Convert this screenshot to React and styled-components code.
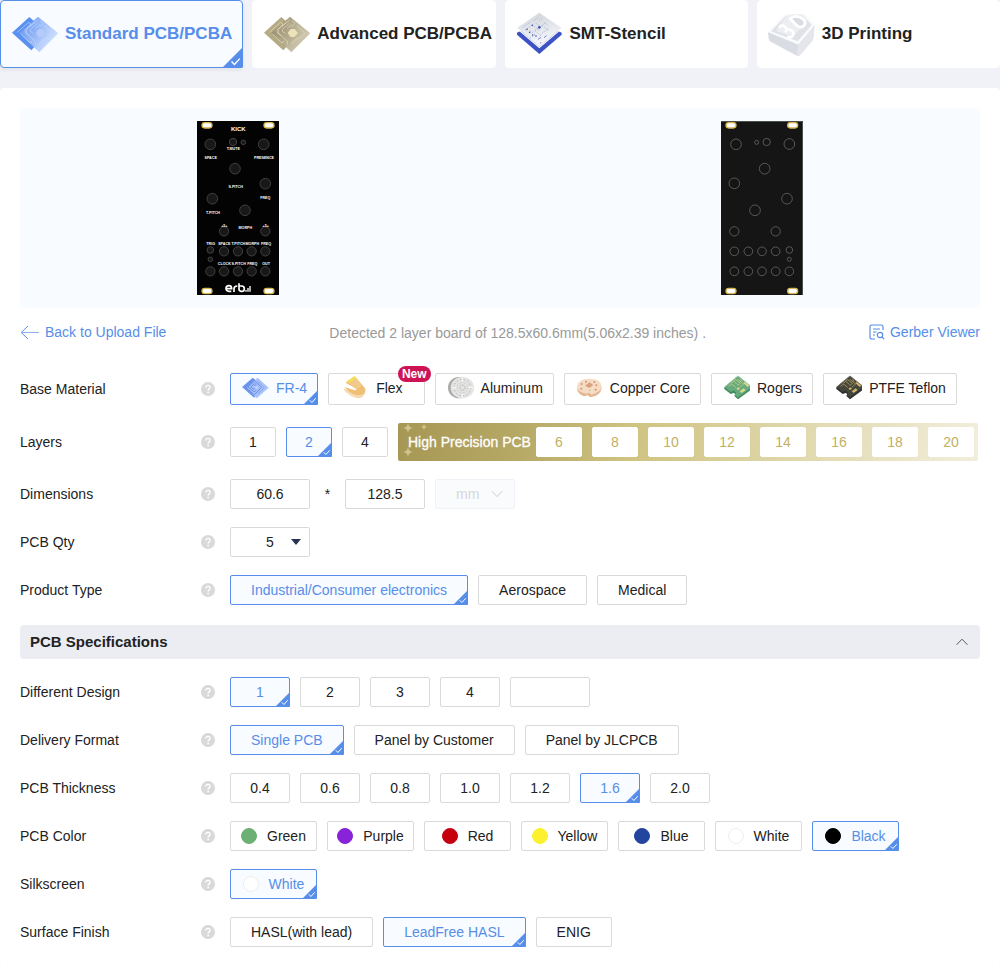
import React, { useState } from "react";
import styled, { createGlobalStyle, css } from "styled-components";

const blue = "#568ee9";
const ink = "#222";

const GlobalStyle = createGlobalStyle`
  *, *::before, *::after { box-sizing: border-box; }
  body {
    margin: 0;
    background: #f1f2f7;
    color: ${ink};
    font-family: "Liberation Sans", Arial, Helvetica, sans-serif;
    font-size: 14px;
    line-height: 16px;
  }
  button, input, select { font: inherit; color: inherit; margin: 0; }
  button { cursor: pointer; }
  svg { display: block; flex: none; }
`;

/* ---------- layout ---------- */

const Tabs = styled.nav`
  display: grid;
  grid-template-columns: repeat(4, 1fr);
  gap: 9px;
  margin-bottom: 20px;
`;

const Tab = styled.button`
  position: relative;
  display: flex;
  align-items: center;
  gap: 6px;
  height: 68px;
  padding: 0 0 0 10px;
  border: 1px solid ${(p) => (p.$on ? blue : "#fff")};
  border-radius: 4px;
  background: ${(p) => (p.$on ? "#f8fbff" : "#fff")};
  color: ${(p) => (p.$on ? blue : ink)};
  box-shadow: ${(p) => (p.$on ? "0 2px 4px rgba(0, 0, 0, 0.06)" : "none")};
  font-size: 17px;
  font-weight: 700;
  white-space: nowrap;
`;

const Panel = styled.main`
  background: #fff;
  border-radius: 4px;
  padding: 20px;
`;

const Preview = styled.section`
  display: grid;
  grid-template-columns: 1fr 1fr;
  gap: 88px;
  justify-items: center;
  align-items: center;
  height: 200px;
  background: #f8fbff;
`;

const InfoBar = styled.div`
  display: flex;
  justify-content: space-between;
  align-items: center;
  height: 48px;
  margin-bottom: 17px;
`;

const InfoText = styled.p`
  margin: 0;
  padding-top: 2px;
  color: #999;
`;

const TextLink = styled.a`
  display: flex;
  align-items: center;
  gap: ${(p) => (p.$end ? "5px" : "6px")};
  color: ${blue};
  text-decoration: none;
`;

const Fields = styled.div`
  display: flex;
  flex-direction: column;
  gap: 18px;
`;

const Row = styled.div`
  display: flex;
  align-items: center;
  gap: 15px;
`;

const RowHead = styled.div`
  display: flex;
  align-items: center;
  justify-content: space-between;
  flex: none;
  width: 195px;
`;

const Controls = styled.div`
  display: flex;
  align-items: center;
  gap: 10px;
`;

const SectionHead = styled.button`
  display: flex;
  align-items: center;
  justify-content: space-between;
  width: 100%;
  height: 34px;
  margin: 20px 0 18px;
  padding: 0 12px 0 10px;
  border: 0;
  border-radius: 4px;
  background: #ecedf3;
  font-size: 15px;
  font-weight: 700;
`;

/* ---------- controls ---------- */

const box = css`
  height: 30px;
  border: 1px solid #d9d9d9;
  border-radius: 2px;
  background: #fff;
`;

const Option = styled.button`
  ${box}
  position: relative;
  display: flex;
  align-items: center;
  justify-content: center;
  padding: 0 ${(p) => (p.$width ? "0" : "20px")};
  width: ${(p) => (p.$width ? `${p.$width}px` : "auto")};
  white-space: nowrap;
  ${(p) => p.$on && css`
    border-color: ${blue};
    background: #f8fbff;
    color: ${blue};
  `}
`;

const Material = styled(Option)`
  height: 32px;
  gap: 7px;
  padding: ${(p) => (p.$wide ? "0 21px 2px 12px" : "0 10px 2px")};
`;

const Swatch = styled(Option)`
  gap: 10px;
  padding: 0;
  width: 87px;
`;

const Dot = styled.span`
  width: 16px;
  height: 16px;
  border-radius: 50%;
  background: ${(p) => p.$color};
  border: 1px solid ${(p) => (p.$color === "#fff" ? "#eee" : p.$color)};
`;

const Badge = styled.span`
  position: absolute;
  top: -8px;
  right: -7px;
  height: 16px;
  padding: 0 4px;
  border-radius: 8px;
  background: #ce1355;
  color: #fff;
  font-size: 12px;
  font-weight: 700;
  line-height: 16px;
`;

const CornerMark = styled.svg`
  position: absolute;
  right: -1px;
  bottom: -1px;
`;

const Field = styled.input`
  ${box}
  width: 80px;
  padding: 0;
  text-align: center;
`;

const Times = styled.span`
  width: 15px;
  text-align: center;
`;

const SelectWrap = styled.div`
  position: relative;
  width: 80px;
  svg {
    position: absolute;
    top: 50%;
    right: ${(p) => p.$right}px;
    transform: translateY(-50%);
    pointer-events: none;
  }
`;

const Select = styled.select`
  ${box}
  appearance: none;
  width: 100%;
  padding: 0 0 0 ${(p) => p.$indent}px;
  &:disabled {
    border-color: #f1f2f7;
    background: #fafbfd;
    color: #d5d7dc;
    opacity: 1;
  }
`;

const Band = styled.div`
  position: relative;
  display: flex;
  align-items: center;
  gap: 10px;
  height: 38px;
  padding: 4px 4px 4px 10px;
  border-radius: 2px;
  background: linear-gradient(97deg, #a79755 0%, #b5a764 20%, #cfc381 40%, #f2eedc 100%);
`;

const BandLabel = styled.span`
  margin-right: -5px;
  color: #fff;
  font-weight: 400;
  -webkit-text-stroke: 0.3px #fff;
  white-space: nowrap;
`;

const BandOption = styled(Option)`
  border-color: #fff;
  color: #c2b05f;
`;

const Sparkles = styled.svg`
  position: absolute;
  top: 0;
  left: 0;
`;

/* ---------- small drawings ---------- */

const Corner = ({ size = 15 }) => (
  <CornerMark width={size} height={size} viewBox="0 0 15 15" aria-hidden="true">
    <path d="M15 0v14a1 1 0 0 1-1 1H0z" fill={blue} />
    <path d="M6.8 10.3l2.1 2.2 3.8-4.2" fill="none" stroke="#fff" strokeWidth="1" />
  </CornerMark>
);

const Help = () => (
  <svg width="14" height="14" viewBox="0 0 14 14" aria-hidden="true">
    <circle cx="7" cy="7" r="7" fill="#d9d9d9" />
    <path d="M4.9 5.5c0-1.3.9-2.1 2.1-2.1s2.1.8 2.1 1.9c0 1.5-2 1.6-2 3.2" fill="none" stroke="#fff" strokeWidth="1.4" />
    <circle cx="7.1" cy="10.4" r="0.9" fill="#fff" />
  </svg>
);

const BackArrow = () => (
  <svg width="19" height="15" viewBox="0 0 19 15" fill="none" stroke={blue} aria-hidden="true">
    <path d="M8 1L1.2 7.5 8 14" />
    <path d="M1.5 7.5H19" opacity="0.7" />
  </svg>
);

const ViewerIcon = () => (
  <svg width="16" height="16" viewBox="0 0 16 16" fill="none" stroke={blue} strokeWidth="1.2" aria-hidden="true">
    <path d="M6 15H2.8A1.8 1.8 0 0 1 1 13.2V2.8A1.8 1.8 0 0 1 2.8 1H12.2A1.8 1.8 0 0 1 14 2.8V6" />
    <path d="M4 5h7M4 8h3.5M4 11h2" />
    <circle cx="11" cy="11" r="2.7" />
    <path d="M13 13l2.2 2.2" />
  </svg>
);

const ChevronUp = () => (
  <svg width="12" height="8" viewBox="0 0 12 8" fill="none" stroke="#555" aria-hidden="true">
    <path d="M0.5 6.8L6 1.2l5.5 5.6" />
  </svg>
);

const ChevronDown = () => (
  <svg width="12" height="8" viewBox="0 0 12 8" fill="none" stroke="#c8cad0" aria-hidden="true">
    <path d="M0.8 1.2L6 6.6l5.2-5.4" />
  </svg>
);

const Triangle = () => (
  <svg width="10" height="6" viewBox="0 0 10 6" aria-hidden="true">
    <path d="M0 0h10L5 6z" fill="#2c3350" />
  </svg>
);

/* Two stacked circuit boards; the palette changes between products. */
const ChipIcon = ({ id, back, from, to, trace, core }) => (
  <svg width="48" height="44" viewBox="33 36 144 132" aria-hidden="true">
    <defs>
      <linearGradient id={id} x1="0" y1="0" x2="1" y2="0.6">
        <stop offset="0" stopColor={from} />
        <stop offset="1" stopColor={to} />
      </linearGradient>
    </defs>
    <path d="M36 98L88 51l54 47-48 53z" fill={back} />
    <path d="M58 99l56-49 61 50-57 57z" fill={`url(#${id})`} opacity="0.95" />
    <g fill="none" stroke={trace} strokeWidth="2" strokeLinejoin="round">
      <path d="M52 97l34-30 7 5-18 18v7l12 10M62 102l28 27 7-5" />
      <path d="M113 60L80 88v12l26 24v10M104 66L89 79M112 70L91 88v6l8 6M118 74l-13 12" />
      <path d="M120 62l9 8-12 12M134 76l24 23-16 16-8 1-15 15" />
    </g>
    <path d="M107 99l9-12h12l10 12-11 12h-11z" fill={core} />
  </svg>
);

const StencilIcon = () => (
  <svg width="48" height="44" viewBox="47 36 144 132" aria-hidden="true">
    <defs>
      <linearGradient id="plate" x1="0.4" y1="0" x2="0.6" y2="1">
        <stop offset="0" stopColor="#d3d8dd" />
        <stop offset="1" stopColor="#f8f9fd" />
      </linearGradient>
    </defs>
    <path d="M50 98l12-6 55 45 55-45 12 6v6l-67 58-67-58z" fill="#3d53c5" />
    <path d="M50 84l67-46 67 46-67 56z" fill="url(#plate)" />
    <path d="M50 84l67 56 67-56v4l-67 57-67-57z" fill="#fff" />
    <g fill="none" stroke="#8794c4" strokeWidth="2" strokeDasharray="3 4">
      <path d="M67 82l24-16M74 90l20-14M100 62l14-10M116 61l12-7M106 69l18 13M101 79l18 13M133 69l11 8M126 77l18 14M135 69l-35 25" />
      <path d="M144 86l-24 17M90 92l15 12-16 9M104 92l20 17" />
    </g>
    <g fill="#3d53ad">
      <circle cx="117" cy="82" r="4" /><circle cx="80" cy="88" r="2.5" />
      <circle cx="88" cy="97" r="2.5" /><circle cx="97" cy="105" r="2.5" />
      <circle cx="107" cy="108" r="2.5" /><circle cx="96" cy="76" r="2.5" />
    </g>
    <path d="M113 118l9-6M119 130l4-2M131 113l8-6" stroke="#6175cf" strokeWidth="2.5" />
  </svg>
);

const PrintIcon = () => (
  <svg width="48" height="44" viewBox="803 36 144 132" aria-hidden="true">
    <path d="M803 96l90 36 50-58-4 40q-1 5-4 9l-36 42q-4 4-9 2l-79-42q-5-3-6-9z" fill="#d9dce2" />
    <path d="M893 132l50-58-4 40q-1 5-4 9l-36 42q-3 3-9 2z" fill="#e4e6ec" />
    <path d="M803 96l48-50q3-3 7-3l52-1q4 0 7 3l24 26q3 3 0 6l-45 54q-3 3-7 1z" fill="#f9fafc" />
    <path d="M812 94l44-46 52-2 26 29-42 49z" fill="#dfe2e7" />
    <path d="M828 88l30-40q2-3 6-3l38-3q4 0 7 3l9 12q2 4-1 7l-34 42q-4 5-10 3l-40-14q-6-2-5-7z" fill="#eceef2" />
    <g fill="none" stroke="#fff" strokeWidth="8" strokeLinecap="round" strokeLinejoin="round">
      <path d="M839 80q8-6 15 0t2 14q9-9 18-2t2 17q-5 5-12 2" />
    </g>
    <path d="M869 56l12-6q8-3 18 2 20 10 14 22-5 10-19 6z" fill="#d9dce2" stroke="#fff" strokeWidth="8" strokeLinejoin="round" />
  </svg>
);

const Fr4Icon = () => (
  <svg width="28" height="26" viewBox="723 198 84 78" aria-hidden="true">
    <path d="M726 234l32-28 34 28-30 32z" fill="#6f9aef" />
    <path d="M741 236l32-30 33 30-36 32z" fill="#a9c3fa" />
    <g fill="none" stroke="#5d83e6" strokeWidth="2.5">
      <path d="M735 234l25-23 25 24-22 22zM744 234l16-15 17 16-14 14zM752 234l9-8 8 8-7 7z" />
      <path d="M773 217l20 19-20 19" opacity="0.6" />
    </g>
    <path d="M763 235l7-7 8 7-8 8z" fill="#bcd0ff" />
  </svg>
);

const FlexIcon = () => (
  <svg width="28" height="26" viewBox="1023 198 84 78" aria-hidden="true">
    <path d="M1032 238q18 14 38 16 18 3 26-14v8q-4 20-24 20-20-4-40-24z" fill="#f6d9b4" />
    <path d="M1037 221l27-19 30 34q5 9-3 18-8 7-25 3-20-5-32-23 16 6 28 9 10 2 7-4z" fill="#efbf76" />
    <path d="M1041 216l23-14 6 6-22 16z" fill="#f5dd54" />
    <path d="M1048 223l21-15 18 21-17 13z" fill="#f2c98a" />
  </svg>
);

const AluminumIcon = () => (
  <svg width="28" height="26" viewBox="1335 198 84 78" aria-hidden="true">
    <ellipse cx="1374" cy="236" rx="33" ry="32" fill="#aaa" />
    <ellipse cx="1384" cy="236" rx="35" ry="32" fill="#e4e4e2" />
    <g fill="none" stroke="#b4b4b2">
      <circle cx="1384" cy="236" r="25" strokeWidth="3" strokeDasharray="5 6" />
      <circle cx="1384" cy="236" r="16" strokeWidth="2" strokeDasharray="3 3" />
      <circle cx="1384" cy="236" r="8" strokeWidth="3" strokeDasharray="4 2" />
    </g>
    <path d="M1384 206v12M1384 254v12M1354 236h12M1402 236h14" stroke="#fff" strokeWidth="3" />
  </svg>
);

const CopperIcon = () => (
  <svg width="28" height="26" viewBox="222 198 84 78" aria-hidden="true">
    <path d="M228 236q0 18 22 26l10-3 8 6q34-6 34-31z" fill="#e3b692" />
    <path d="M228 232q3-23 37-23 36 1 37 23-2 19-31 25l-6-6-10 3q-27-5-27-22z" fill="#f6dcc4" />
    <path d="M265 220l12 8-12 9-13-7z" fill="#d9a27f" />
    <g fill="#d29472">
      <circle cx="255" cy="218" r="3" /><circle cx="280" cy="219" r="3" />
      <circle cx="242" cy="225" r="3" /><circle cx="241" cy="239" r="3" />
      <circle cx="286" cy="229" r="3" /><circle cx="284" cy="242" r="3" />
      <circle cx="266" cy="244" r="2" />
    </g>
  </svg>
);

/* Notched board with contact pads, used for the high frequency laminates. */
const LaminateIcon = ({ top, side, edge, trace }) => (
  <svg width="28" height="26" viewBox="663 198 84 78" aria-hidden="true">
    <path d="M670 234v6l19 15 9-3 5 3-3 6 11 10 42-31v-6z" fill={side} />
    <path d="M670 234l41-34 42 34-42 31-10-8 5-6-8-7-9 5z" fill={top} />
    <path d="M671 234l40-33 41 33" fill="none" stroke={edge} strokeWidth="3" />
    <g fill="none" stroke={trace} strokeWidth="2">
      <path d="M683 232l9-7 12 10M691 222l7-5 12 10M699 216l5-4 14 11-8 7" />
      <path d="M710 211l18 14-12 10M717 211l7 6" />
    </g>
    <path d="M727 222l5-3 13 11-5 4zM716 247l12-9 6 5-12 9zM706 239l6-4 5 4-6 4z" fill={trace} />
  </svg>
);

/* ---------- board previews ---------- */

const frontHoles = [
  [61, 88, 16], [129, 81, 11], [160, 82, 7], [221, 88, 16], [135, 161, 16], [226, 206, 16],
  [67, 251, 16], [165, 286, 16], [102, 349, 14], [226, 349, 14], [61, 405, 10], [61, 433, 7],
  [102, 409, 14], [144, 409, 14], [185, 409, 14], [226, 409, 14],
  [61, 469, 14], [102, 469, 14], [144, 469, 14], [185, 469, 14], [226, 469, 14],
];

const frontTexts = [
  ["T.MUTE", 130, 106], ["SPACE", 62, 133], ["PRESENCE", 222, 133], ["S.PITCH", 137, 218],
  ["FREQ", 226, 251], ["T.PITCH", 69, 297], ["MORPH", 166, 343], ["+5+", 103, 335], ["+5+", 227, 335],
  ["TRIG", 62, 391], ["SPACE", 103, 391], ["T.PITCH", 145, 391], ["MORPH", 187, 391], ["FREQ", 228, 391],
  ["CLOCK", 103, 450], ["S.PITCH", 146, 450], ["FREQ", 187, 450], ["OUT", 228, 450],
];

const backHoles = [
  [72, 88, 16], [134, 82, 6], [164, 81, 11], [232, 87, 16], [158, 161, 16], [67, 205, 16],
  [225, 251, 16], [129, 286, 16], [67, 349, 14], [191, 349, 14], [232, 405, 10], [232, 433, 6],
  [67, 409, 13], [109, 409, 13], [150, 409, 13], [191, 409, 13],
  [67, 469, 13], [109, 469, 13], [150, 469, 13], [191, 469, 13], [232, 469, 13],
];

const Slots = ({ xs }) =>
  xs.flatMap((x) => [31, 528].map((y) => (
    <rect key={`${x}-${y}`} x={x - 15} y={y - 8} width="30" height="16" rx="8" fill="#fff" stroke="#d5b64e" strokeWidth="4" />
  )));

const BoardFront = () => (
  <svg width="82" height="174" viewBox="21 18 246 522" role="img" aria-label="Board front">
    <rect x="21" y="18" width="246" height="522" fill="#030303" />
    <Slots xs={[51, 237]} />
    <g fill="#181818" stroke="#585858" strokeWidth="2">
      {frontHoles.map(([x, y, r]) => <circle key={`${x}-${y}`} cx={x} cy={y} r={r} />)}
    </g>
    <g fill="#fff" fontWeight="700" textAnchor="middle">
      <text x="145" y="47" fontSize="18">KICK</text>
      {frontTexts.map(([t, x, y]) => <text key={`${x}-${y}`} x={x} y={y} fontSize="11">{t}</text>)}
    </g>
    <g fill="none" stroke="#fff" strokeWidth="5">
      <path d="M109 521h16q0-9-8-9-9 0-9 8 0 9 9 9h7M132 531v-10q0-8 10-8M147 505v18q0 6 8 6t8-8-8-8h-7" />
    </g>
    <path d="M166 525h4v5h-4zM172 519h4v11h-4zM178 513h4v17h-4z" fill="#fff" />
  </svg>
);

const BoardBack = () => (
  <svg width="82" height="174" viewBox="27 18 246 522" role="img" aria-label="Board back">
    <rect x="27" y="18" width="246" height="522" fill="#151515" />
    <path d="M27 19.5h244.5V540" fill="none" stroke="#4c504c" strokeWidth="3" />
    <Slots xs={[57, 242]} />
    <g fill="none" stroke="#777" strokeWidth="2">
      {backHoles.map(([x, y, r]) => <circle key={`${x}-${y}`} cx={x} cy={y} r={r} />)}
    </g>
  </svg>
);

/* ---------- data ---------- */

const products = [
  ["Standard PCB/PCBA", <ChipIcon id="chipStandard" back="#5a90ef" from="#5b8def" to="#d3e3fe" trace="#c3d8ff" core="#b4cbfb" />],
  ["Advanced PCB/PCBA", <ChipIcon id="chipAdvanced" back="#b5aa84" from="#8c8265" to="#d3cbb0" trace="#e8e0be" core="#ece3ba" />],
  ["SMT-Stencil", <StencilIcon />],
  ["3D Printing", <PrintIcon />],
];

const materials = [
  ["FR-4", <Fr4Icon />],
  ["Flex", <FlexIcon />],
  ["Aluminum", <AluminumIcon />],
  ["Copper Core", <CopperIcon />],
  ["Rogers", <LaminateIcon top="#69aa7d" side="#3f8d5e" edge="#98caa5" trace="#dcd98c" />],
  ["PTFE Teflon", <LaminateIcon top="#44453d" side="#30312d" edge="#77786d" trace="#d0b468" />],
];

const colors = [
  ["Green", "#6db074"], ["Purple", "#8923d8"], ["Red", "#c7000f"], ["Yellow", "#fcf02f"],
  ["Blue", "#22469e"], ["White", "#fff"], ["Black", "#000"],
];

/* ---------- form parts ---------- */

const FormRow = ({ id, label, htmlFor, children }) => (
  <Row>
    <RowHead>
      {htmlFor ? <label htmlFor={htmlFor}>{label}</label> : <span id={id}>{label}</span>}
      <Help />
    </RowHead>
    <Controls role={htmlFor ? undefined : "group"} aria-labelledby={htmlFor ? undefined : id}>
      {children}
    </Controls>
  </Row>
);

const Choices = ({ items, value, onChange, width }) =>
  items.map((item) => (
    <Option key={item} type="button" $width={width} $on={item === value} aria-pressed={item === value} onClick={() => onChange(item)}>
      {item}
      {item === value && <Corner />}
    </Option>
  ));

const Swatches = ({ items, value, onChange }) =>
  items.map(([name, color]) => (
    <Swatch key={name} type="button" $on={name === value} aria-pressed={name === value} onClick={() => onChange(name)}>
      <Dot $color={color} />
      {name}
      {name === value && <Corner />}
    </Swatch>
  ));

export default function App() {
  const [form, setForm] = useState({
    product: "Standard PCB/PCBA",
    material: "FR-4",
    layers: "2",
    type: "Industrial/Consumer electronics",
    design: "1",
    delivery: "Single PCB",
    thickness: "1.6",
    color: "Black",
    silkscreen: "White",
    finish: "LeadFree HASL",
  });
  const [open, setOpen] = useState(true);
  const set = (key) => (value) => setForm((f) => ({ ...f, [key]: value }));

  return (
    <>
      <GlobalStyle />
      <Tabs aria-label="Products">
        {products.map(([name, icon]) => (
          <Tab key={name} type="button" $on={name === form.product} aria-pressed={name === form.product} onClick={() => set("product")(name)}>
            {icon}
            {name}
            {name === form.product && <Corner size={21} />}
          </Tab>
        ))}
      </Tabs>

      <Panel>
        <Preview aria-label="Board preview">
          <BoardFront />
          <BoardBack />
        </Preview>

        <InfoBar>
          <TextLink href="#upload"><BackArrow />Back to Upload File</TextLink>
          <InfoText>Detected 2 layer board of 128.5x60.6mm(5.06x2.39 inches) .</InfoText>
          <TextLink href="#viewer" $end><ViewerIcon />Gerber Viewer</TextLink>
        </InfoBar>

        <Fields>
          <FormRow id="material" label="Base Material">
            {materials.map(([name, icon]) => (
              <Material key={name} type="button" $wide={name === "Flex"} $on={name === form.material} aria-pressed={name === form.material} onClick={() => set("material")(name)}>
                {icon}
                {name}
                {name === "Flex" && <Badge>New</Badge>}
                {name === form.material && <Corner />}
              </Material>
            ))}
          </FormRow>

          <FormRow id="layers" label="Layers">
            <Choices items={["1", "2", "4"]} value={form.layers} onChange={set("layers")} width={46} />
            <Band>
              <Sparkles width="36" height="38" viewBox="0 0 36 38" fill="#d0c48c" aria-hidden="true">
                <path d="M10 0q.6 4.400 5 5-4.400.6-5 5-.6-4.400-5-5 4.400-.6 5-5zM26 1q.4 2.600 3 3-2.600.4-3 3-.4-2.600-3-3 2.600-.4 3-3zM10 24q.6 4.400 5 5-4.400.6-5 5-.6-4.400-5-5 4.400-.6 5-5z" />
              </Sparkles>
              <BandLabel>High Precision PCB</BandLabel>
              {["6", "8", "10", "12", "14", "16", "18", "20"].map((n) => (
                <BandOption key={n} type="button" $width={46} $on={n === form.layers} aria-pressed={n === form.layers} onClick={() => set("layers")(n)}>
                  {n}
                  {n === form.layers && <Corner />}
                </BandOption>
              ))}
            </Band>
          </FormRow>

          <FormRow label="Dimensions" htmlFor="width">
            <Field id="width" defaultValue="60.6" />
            <Times>*</Times>
            <Field aria-label="Height" defaultValue="128.5" />
            <SelectWrap $right={12}>
              <Select aria-label="Unit" disabled $indent={20}><option>mm</option></Select>
              <ChevronDown />
            </SelectWrap>
          </FormRow>

          <FormRow label="PCB Qty" htmlFor="qty">
            <SelectWrap $right={9}>
              <Select id="qty" $indent={35} defaultValue="5">
                <option>5</option>
                <option>10</option>
                <option>20</option>
              </Select>
              <Triangle />
            </SelectWrap>
          </FormRow>

          <FormRow id="type" label="Product Type">
            <Choices items={["Industrial/Consumer electronics", "Aerospace", "Medical"]} value={form.type} onChange={set("type")} />
          </FormRow>
        </Fields>

        <SectionHead type="button" aria-expanded={open} onClick={() => setOpen(!open)}>
          PCB Specifications
          <ChevronUp />
        </SectionHead>

        {open && (
          <Fields>
            <FormRow id="design" label="Different Design">
              <Choices items={["1", "2", "3", "4"]} value={form.design} onChange={set("design")} width={60} />
              <Field aria-label="Other number of designs" />
            </FormRow>
            <FormRow id="delivery" label="Delivery Format">
              <Choices items={["Single PCB", "Panel by Customer", "Panel by JLCPCB"]} value={form.delivery} onChange={set("delivery")} />
            </FormRow>
            <FormRow id="thickness" label="PCB Thickness">
              <Choices items={["0.4", "0.6", "0.8", "1.0", "1.2", "1.6", "2.0"]} value={form.thickness} onChange={set("thickness")} width={60} />
            </FormRow>
            <FormRow id="color" label="PCB Color">
              <Swatches items={colors} value={form.color} onChange={set("color")} />
            </FormRow>
            <FormRow id="silkscreen" label="Silkscreen">
              <Swatches items={[["White", "#fff"]]} value={form.silkscreen} onChange={set("silkscreen")} />
            </FormRow>
            <FormRow id="finish" label="Surface Finish">
              <Choices items={["HASL(with lead)", "LeadFree HASL", "ENIG"]} value={form.finish} onChange={set("finish")} />
            </FormRow>
          </Fields>
        )}
      </Panel>
    </>
  );
}
